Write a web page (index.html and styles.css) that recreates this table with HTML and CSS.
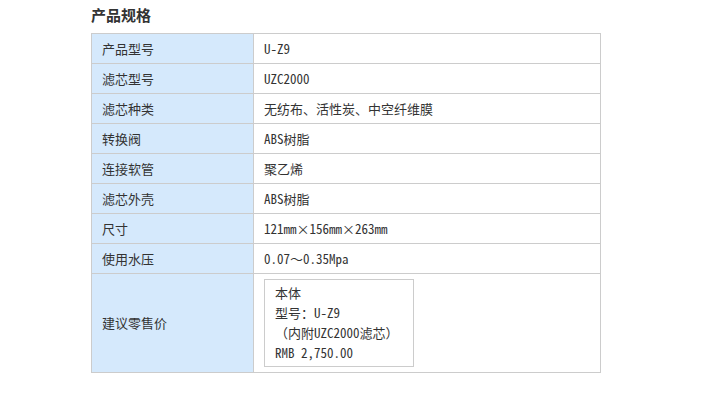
FILE: index.html
```html
<!DOCTYPE html>
<html lang="zh-CN">
<head>
<meta charset="utf-8">
<title>产品规格</title>
<link rel="stylesheet" href="styles.css">
</head>
<body>
<div class="page">
  <h2 class="title">产品规格</h2>
  <table class="spec">
    <tr><th>产品型号</th><td>U-Z9</td></tr>
    <tr><th>滤芯型号</th><td>UZC2000</td></tr>
    <tr><th>滤芯种类</th><td>无纺布、活性炭、中空纤维膜</td></tr>
    <tr><th>转换阀</th><td>ABS树脂</td></tr>
    <tr><th>连接软管</th><td>聚乙烯</td></tr>
    <tr><th>滤芯外壳</th><td>ABS树脂</td></tr>
    <tr><th>尺寸</th><td>121mm×156mm×263mm</td></tr>
    <tr><th>使用水压</th><td>0.07～0.35Mpa</td></tr>
    <tr class="price-row"><th>建议零售价</th><td>
      <div class="price-box">
        <p>本体</p>
        <p>型号：U-Z9</p>
        <p>（内附UZC2000滤芯）</p>
        <p>RMB 2,750.00</p>
      </div>
    </td></tr>
  </table>
</div>
</body>
</html>
```

FILE: styles.css
```css
html, body {
  margin: 0;
  padding: 0;
  background: #ffffff;
}
body {
  font-family: "Noto Sans Mono CJK SC", "Noto Sans CJK SC", sans-serif;
  color: #333333;
  font-size: 13px;
}
.page {
  padding-left: 91px;
}
.title {
  margin: 0 0 3px 0;
  font-family: "Noto Sans CJK SC", sans-serif;
  font-size: 15px;
  font-weight: bold;
  line-height: 30px;
  color: #333333;
}
.spec {
  border-collapse: collapse;
  width: 510px;
  table-layout: fixed;
}
.spec th,
.spec td {
  border: 1px solid #cccccc;
  height: 29px;
  padding: 0 10px;
  text-align: left;
  vertical-align: middle;
  font-weight: normal;
  line-height: 20px;
  box-sizing: border-box;
}
.spec th {
  width: 162px;
  background: #d5e9fc;
}
.spec tr {
  height: 30px;
}
.price-row th,
.price-row td {
  height: 99px;
}
.price-box {
  display: inline-block;
  border: 1px solid #cccccc;
  padding: 3px 14px 3px 10px;
  vertical-align: middle;
}
.price-box p {
  margin: 0;
  line-height: 20px;
  white-space: nowrap;
}
```
